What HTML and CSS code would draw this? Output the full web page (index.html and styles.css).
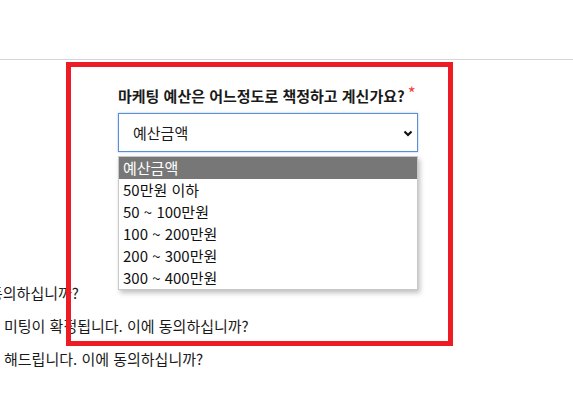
FILE: index.html
```html
<!DOCTYPE html>
<html lang="ko">
<head>
    <meta charset="UTF-8">
    <meta name="viewport" content="width=device-width, initial-scale=1.0">
    <title>마케팅 예산</title>
    <link rel="stylesheet" href="styles.css">
</head>
<body>
    <div class="top-bar"></div>

    <main class="survey">
        <div class="terms">
            <p class="term-line first">에 동의하십니까?</p>
            <p class="term-line">미팅이 확정됩니다. 이에 동의하십니까?</p>
            <p class="term-line">해드립니다. 이에 동의하십니까?</p>
        </div>

        <div class="highlight-box">
            <label class="question" for="budget">마케팅 예산은 어느정도로 책정하고 계신가요?<span class="required">*</span></label>

            <div class="select-wrap">
                <select id="budget" class="budget-select">
                    <option>예산금액</option>
                    <option>50만원 이하</option>
                    <option>50 ~ 100만원</option>
                    <option>100 ~ 200만원</option>
                    <option>200 ~ 300만원</option>
                    <option>300 ~ 400만원</option>
                </select>
                <svg class="chevron" width="10" height="7" viewBox="0 0 10 7">
                    <polyline points="1.5,1.5 5,5 8.5,1.5" fill="none" stroke="#111" stroke-width="2.2"/>
                </svg>

                <ul class="option-list">
                    <li class="active">예산금액</li>
                    <li>50만원 이하</li>
                    <li>50 ~ 100만원</li>
                    <li>100 ~ 200만원</li>
                    <li>200 ~ 300만원</li>
                    <li>300 ~ 400만원</li>
                </ul>
            </div>
        </div>
    </main>
</body>
</html>
```

FILE: styles.css
```css
* {
    margin: 0;
    padding: 0;
    box-sizing: border-box;
}

body {
    font-family: "Noto Sans CJK KR", "Noto Sans", sans-serif;
    font-size: 15px;
    color: #1a1a1a;
    background: #fff;
    overflow: hidden;
}

.top-bar {
    height: 60px;
    border-bottom: 1px solid #d4d4db;
}

.survey {
    position: relative;
    height: 342px;
}

/* background text that runs under the highlight */
.terms {
    padding-top: 216px;
}

.term-line {
    line-height: 33px;
    padding-left: 4px;
    white-space: nowrap;
}

.term-line.first {
    text-indent: -33px;
}

.highlight-box {
    position: absolute;
    left: 66px;
    top: 2px;
    width: 387px;
    height: 284px;
    border: 5px solid #ed1c24;
    padding: 19px 0 0 47px;
}

.question {
    display: block;
    font-weight: 700;
    line-height: 20px;
    height: 20px;
    margin-bottom: 7px;
    white-space: nowrap;
}

.required {
    color: #f24444;
    font-size: 17px;
    font-weight: 400;
    line-height: 14px;
    vertical-align: top;
    margin-left: 3px;
}

.select-wrap {
    position: relative;
    width: 300px;
}

.budget-select {
    appearance: none;
    -webkit-appearance: none;
    display: block;
    width: 300px;
    height: 39px;
    padding-left: 14px;
    border: 1px solid #5a8fd4;
    border-radius: 0;
    box-shadow: 0 0 2px rgba(90, 143, 212, 0.6);
    background: #fff;
    font-family: inherit;
    font-size: 15px;
    color: #1a1a1a;
    outline: none;
}

.chevron {
    position: absolute;
    right: 5px;
    top: 17px;
}

.option-list {
    position: absolute;
    left: 0;
    top: 43px;
    width: 300px;
    list-style: none;
    background: #fff;
    border: 1px solid #c8c8c8;
    box-shadow: 2px 3px 5px rgba(0, 0, 0, 0.25);
}

.option-list li {
    height: 22px;
    line-height: 22px;
    padding-left: 4px;
    color: #111;
}

.option-list li.active {
    background: #777;
    color: #fff;
}
```
